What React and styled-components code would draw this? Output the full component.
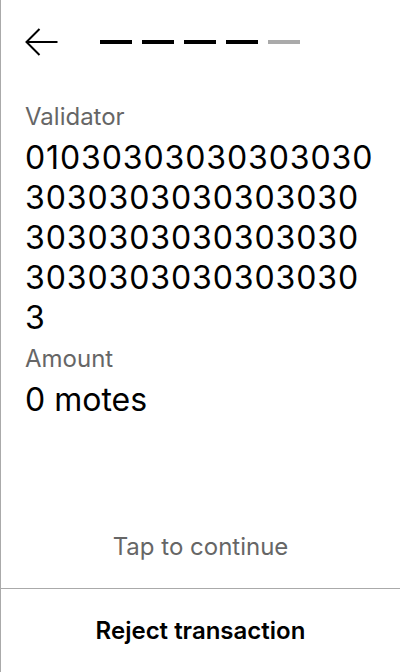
import React from 'react'
import styled, { createGlobalStyle } from 'styled-components'

const GlobalStyle = createGlobalStyle`
  html, body {
    margin: 0;
    padding: 0;
    background: #ffffff;
  }
  body {
    font-family: Inter, "Noto Sans", sans-serif;
    color: #000000;
  }
`

const Screen = styled.div`
  display: flex;
  flex-direction: column;
  width: 400px;
  height: 672px;
  box-sizing: border-box;
  border-left: 1px solid #aaaaaa;
`

const Header = styled.div`
  display: flex;
  align-items: center;
  height: 28px;
  padding: 28px 0 0 24px;
`

const BackButton = styled.button`
  display: flex;
  border: none;
  background: none;
  padding: 0;
  width: 34px;
  height: 28px;
  cursor: pointer;
`

const Steps = styled.div`
  display: flex;
  gap: 10px;
  margin-left: 41px;
`

const Step = styled.div`
  width: 32px;
  height: 4px;
  background: ${(p) => (p.$done ? '#000000' : '#aaaaaa')};
`

const Body = styled.div`
  flex: 1;
  display: flex;
  flex-direction: column;
  padding: 45px 24px 0 24px;
`

const Label = styled.div`
  font-size: 24px;
  line-height: 32px;
  color: #666666;
  margin-bottom: 5px;
`

const Value = styled.div`
  font-size: 32px;
  line-height: 40px;
  letter-spacing: ${(p) => (p.$hash ? '0.9px' : 'normal')};
  word-break: break-all;
  margin-bottom: 5px;
`

const Hint = styled.div`
  margin-top: auto;
  padding-bottom: 27px;
  text-align: center;
  font-size: 24px;
  color: #666666;
`

const Footer = styled.button`
  height: 84px;
  border: none;
  border-top: 1px solid #aaaaaa;
  background: #ffffff;
  font-family: Inter, "Noto Sans", sans-serif;
  font-size: 24px;
  font-weight: 600;
  color: #000000;
  cursor: pointer;
`

const steps = [true, true, true, true, false]
const validator = '01' + '03'.repeat(32)

export default function App() {
  return (
    <>
      <GlobalStyle />
      <Screen>
        <Header>
          <BackButton aria-label="Back">
            <svg width="34" height="28" viewBox="0 0 34 28" fill="none" stroke="#000" strokeWidth="2">
              <path d="M1.5 14H32.5" />
              <path d="M14.5 1L1.5 14L14.5 27" />
            </svg>
          </BackButton>
          <Steps>
            {steps.map((done, i) => (
              <Step key={i} $done={done} />
            ))}
          </Steps>
        </Header>
        <Body>
          <Label>Validator</Label>
          <Value $hash>{validator}</Value>
          <Label>Amount</Label>
          <Value>0 motes</Value>
          <Hint>Tap to continue</Hint>
        </Body>
        <Footer>Reject transaction</Footer>
      </Screen>
    </>
  )
}
